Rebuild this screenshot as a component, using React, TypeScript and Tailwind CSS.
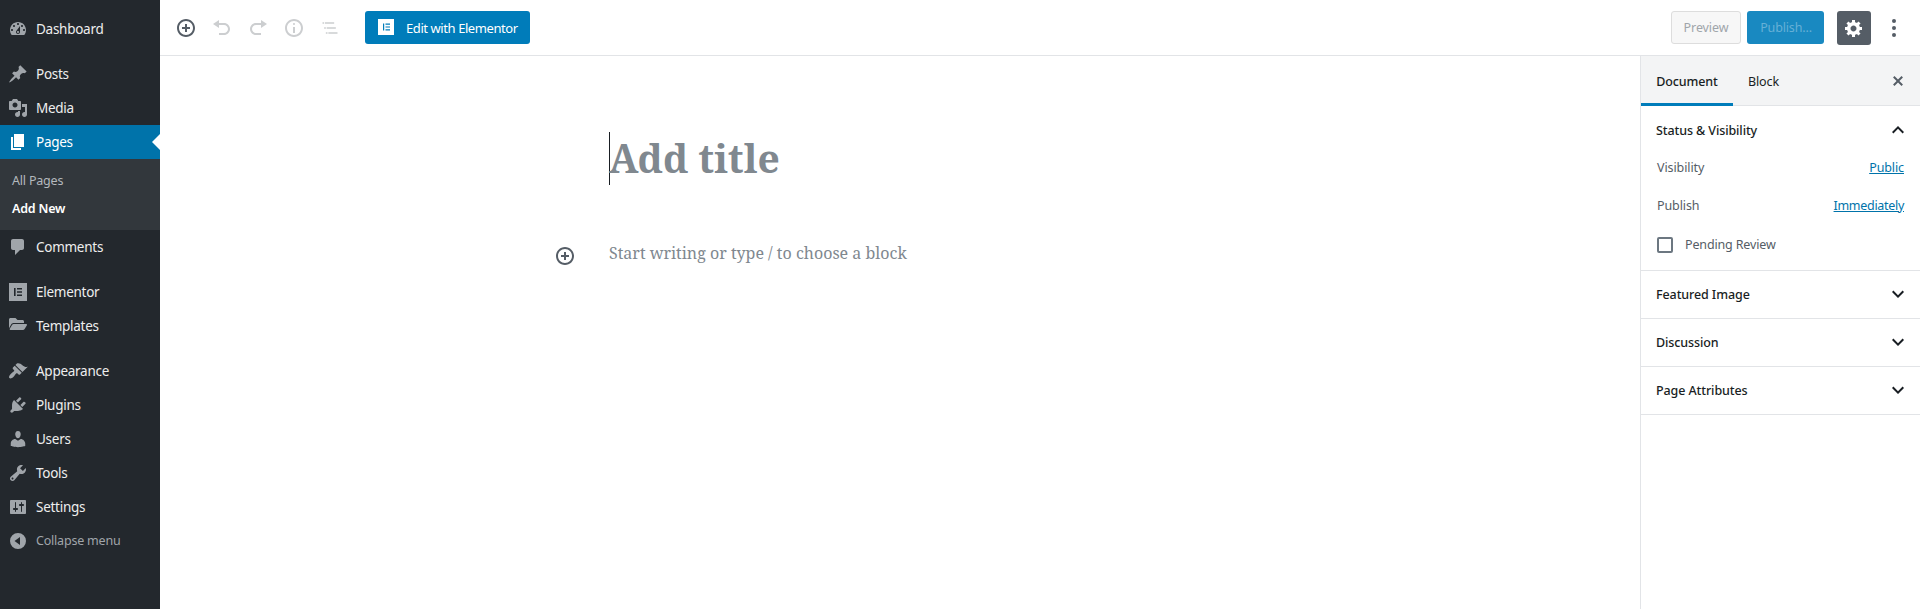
import React from "react";
import { FaFolderOpen } from "react-icons/fa";

const paths = {
  dashboard:
    "M3.76 16h12.48c1.1-1.37 1.76-3.11 1.76-5 0-4.42-3.58-8-8-8s-8 3.58-8 8c0 1.89.66 3.63 1.76 5zM10 4c.55 0 1 .45 1 1s-.45 1-1 1-1-.45-1-1 .45-1 1-1zM6 6c.55 0 1 .45 1 1s-.45 1-1 1-1-.45-1-1 .45-1 1-1zm8 0c.55 0 1 .45 1 1s-.45 1-1 1-1-.45-1-1 .45-1 1-1zm-5.37 5.55L12 7v6c0 1.1-.9 2-2 2s-2-.9-2-2c0-.57.24-1.08.63-1.45zM4 10c.55 0 1 .45 1 1s-.45 1-1 1-1-.45-1-1 .45-1 1-1zm12 0c.55 0 1 .45 1 1s-.45 1-1 1-1-.45-1-1 .45-1 1-1zm-5 3c0-.55-.45-1-1-1s-1 .45-1 1 .45 1 1 1 1-.45 1-1z",
  post: "M10.44 3.02l1.82-1.82 6.36 6.35-1.83 1.82c-1.05-.68-2.48-.57-3.41.36l-.75.75c-.92.93-1.04 2.35-.35 3.41l-1.83 1.82-2.41-2.41-2.8 2.79c-.42.42-3.38 2.71-3.8 2.29s1.86-3.39 2.28-3.81l2.79-2.79L4.1 9.36l1.83-1.82c1.05.69 2.48.57 3.4-.36l.75-.75c.93-.92 1.05-2.35.36-3.41z",
  media:
    "M13 11V4c0-.55-.45-1-1-1h-1.67L9 1H5L3.67 3H2c-.55 0-1 .45-1 1v7c0 .55.45 1 1 1h10c.55 0 1-.45 1-1zM7 4.5c1.38 0 2.5 1.12 2.5 2.5S8.38 9.5 7 9.5 4.5 8.38 4.5 7 5.62 4.5 7 4.5zM14 6h5v10.5c0 1.38-1.12 2.5-2.5 2.5S14 17.88 14 16.5s1.12-2.5 2.5-2.5c.17 0 .34.02.5.05V9h-3V6zm-4 8.05V13h2v3.5c0 1.38-1.12 2.5-2.5 2.5S7 17.88 7 16.5 8.12 14 9.5 14c.17 0 .34.02.5.05z",
  page: "M6 15V2h10v13H6zm-1 1h8v2H3V5h2v11z",
  comments:
    "M5 2h9c1.1 0 2 .9 2 2v7c0 1.1-.9 2-2 2h-2l-5 5v-5H5c-1.1 0-2-.9-2-2V4c0-1.1.9-2 2-2z",
  elementor: "M1 1h18v18H1zM6 6v8h1.6V6zM9 6v1.6h5V6zM9 9.2v1.6h5V9.2zM9 12.4V14h5v-1.6z",
  appearance:
    "M14.48 11.06L7.41 3.99l1.5-1.5c.5-.56 2.3-.47 3.51.32 1.21.8 1.43 1.28 2.91 2.1 1.18.64 2.45 1.26 4.45.85zm-.71.71L6.7 4.7 4.93 6.47c-.39.39-.39 1.02 0 1.41l1.06 1.06c.39.39.39 1.03 0 1.42-.6.6-1.43 1.11-2.21 1.69-.35.26-.7.53-1.01.84C1.43 14.23.4 16.08 1.4 17.07c.99 1 2.84-.03 4.18-1.36.31-.31.58-.66.85-1.02.57-.78 1.08-1.61 1.69-2.21.39-.39 1.02-.39 1.41 0l1.06 1.06c.39.39 1.02.39 1.41 0z",
  plugins:
    "M13.11 4.36L9.87 7.6 8 5.73l3.24-3.24c.35-.34 1.05-.2 1.56.32.52.51.66 1.21.31 1.55zm-8 1.77l.91-1.12 9.01 9.01-1.19.84c-.71.71-2.63 1.16-3.82 1.16H6.14L4.9 17.26c-.59.59-1.54.59-2.12 0-.59-.58-.59-1.53 0-2.12l1.24-1.24v-3.88c0-1.13.4-3.19 1.09-3.89zm7.26 3.97l3.24-3.24c.34-.35 1.04-.21 1.55.31.52.51.66 1.21.31 1.55l-3.24 3.25z",
  users:
    "M10 9.25c-2.27 0-2.73-3.44-2.73-3.44C7 4.02 7.82 2 9.97 2c2.16 0 2.98 2.02 2.71 3.81 0 0-.41 3.44-2.68 3.44zm0 2.57L12.72 10c2.39 0 4.52 2.33 4.52 4.53v2.49s-3.65 1.13-7.24 1.13c-3.65 0-7.24-1.13-7.24-1.13v-2.49c0-2.25 1.94-4.48 4.47-4.48z",
  tools:
    "M16.68 9.77c-1.34 1.34-3.3 1.67-4.95.99l-5.41 6.52c-.99.99-2.59.99-3.58 0s-.99-2.59 0-3.57l6.52-5.42c-.68-1.65-.35-3.61.99-4.95 1.28-1.28 3.12-1.62 4.72-1.06l-2.89 2.89 2.82 2.82 2.86-2.87c.53 1.58.18 3.39-1.08 4.65zM3.81 16.21c.4.39 1.04.39 1.43 0 .4-.4.4-1.04 0-1.43-.39-.4-1.03-.4-1.43 0-.39.39-.39 1.03 0 1.43z",
  settings:
    "M18 16V4c0-.55-.45-1-1-1H3c-.55 0-1 .45-1 1v12c0 .55.45 1 1 1h14c.55 0 1-.45 1-1zM8 11h1c.55 0 1 .45 1 1s-.45 1-1 1H8v1.5c0 .28-.22.5-.5.5s-.5-.22-.5-.5V13H6c-.55 0-1-.45-1-1s.45-1 1-1h1V5.5c0-.28.22-.5.5-.5s.5.22.5.5V11zm5-2h-1c-.55 0-1-.45-1-1s.45-1 1-1h1V5.5c0-.28.22-.5.5-.5s.5.22.5.5V7h1c.55 0 1 .45 1 1s-.45 1-1 1h-1v5.5c0 .28-.22.5-.5.5s-.5-.22-.5-.5V9z",
  collapse: "M10 2a8 8 0 1 0 0 16 8 8 0 0 0 0-16zM12 6v8l-5.500-4z",
  insert:
    "M10 1c-5 0-9 4-9 9s4 9 9 9 9-4 9-9-4-9-9-9zm0 16c-3.9 0-7-3.1-7-7s3.1-7 7-7 7 3.1 7 7-3.1 7-7 7zm1-11H9v3H6v2h3v3h2v-3h3V9h-3V6z",
  undo: "M12 5H7V2L1 6l6 4V7h5c2.2 0 4 1.8 4 4s-1.8 4-4 4H7v2h5c3.3 0 6-2.7 6-6s-2.7-6-6-6z",
  redo: "M8 5h5V2l6 4-6 4V7H8c-2.2 0-4 1.8-4 4s1.800 4 4 4h5v2H8c-3.300 0-6-2.700-6-6s2.700-6 6-6z",
  info: "M9 15h2V9H9v6zm1-10c-.5 0-1 .5-1 1s.5 1 1 1 1-.5 1-1-.5-1-1-1zm0-4c-5 0-9 4-9 9s4 9 9 9 9-4 9-9-4-9-9-9zm0 16c-3.9 0-7-3.1-7-7s3.1-7 7-7 7 3.1 7 7-3.1 7-7 7z",
  gear: "M18 12h-2.18c-.17.7-.44 1.35-.81 1.93l1.54 1.54-2.1 2.1-1.54-1.54c-.58.36-1.23.63-1.91.79V19H8v-2.18c-.68-.16-1.33-.43-1.91-.79l-1.54 1.54-2.12-2.12 1.54-1.54c-.36-.58-.63-1.23-.79-1.91H1V9.03h2.17c.16-.7.44-1.35.8-1.94L2.43 5.55l2.1-2.1 1.54 1.54c.58-.37 1.24-.64 1.93-.81V2h3v2.18c.68.16 1.33.43 1.91.79l1.54-1.54 2.12 2.12-1.54 1.54c.36.59.64 1.24.8 1.94H18V12zm-8.5 1.500c1.66 0 3-1.34 3-3s-1.34-3-3-3-3 1.34-3 3 1.34 3 3 3z",
  close:
    "M14.95 6.46L11.41 10l3.54 3.54-1.41 1.41L10 11.42l-3.53 3.53-1.42-1.42L8.58 10 5.05 6.47l1.42-1.42L10 8.58l3.54-3.53z",
};

type IconName = keyof typeof paths;

function Icon({ name, className = "" }: { name: IconName; className?: string }) {
  return (
    <svg viewBox="0 0 20 20" fill="currentColor" fillRule="evenodd" className={`size-5 shrink-0 ${className}`}>
      <path d={paths[name]} />
    </svg>
  );
}

function MenuItem({ icon, label, active }: { icon: IconName | "folder"; label: string; active?: boolean }) {
  const iconColor = active ? "text-white" : "text-[#a0a5aa]";
  return (
    <a className={`relative flex h-[34px] items-center pl-2 ${active ? "bg-[#0073aa] text-white" : "text-[#eeeeee]"}`}>
      {icon === "folder" ? (
        <span className="flex w-5 justify-center">
          <FaFolderOpen className={`h-4 w-[18px] -translate-y-0.5 ${iconColor}`} />
        </span>
      ) : (
        <Icon name={icon} className={iconColor} />
      )}
      <span className="ml-2 text-[13.5px] leading-[18px] tracking-[-0.27px]">{label}</span>
      {active && (
        <span className="absolute top-[9px] right-0 border-y-8 border-r-8 border-y-transparent border-r-white" />
      )}
    </a>
  );
}

function AdminMenu() {
  return (
    <nav className="flex w-40 shrink-0 flex-col bg-[#23282d] pt-3">
      <MenuItem icon="dashboard" label="Dashboard" />
      <div className="mt-[11px]">
        <MenuItem icon="post" label="Posts" />
        <MenuItem icon="media" label="Media" />
        <MenuItem icon="page" label="Pages" active />
        <div className="flex h-[71px] flex-col bg-[#32373c] pt-2 pl-3 text-[12.5px] leading-7">
          <a className="tracking-[-0.2px] text-[#b4b9be]">All Pages</a>
          <a className="font-semibold tracking-[-0.2px] text-white">Add New</a>
        </div>
        <MenuItem icon="comments" label="Comments" />
      </div>
      <div className="mt-[11px]">
        <MenuItem icon="elementor" label="Elementor" />
        <MenuItem icon="folder" label="Templates" />
      </div>
      <div className="mt-[11px]">
        <MenuItem icon="appearance" label="Appearance" />
        <MenuItem icon="plugins" label="Plugins" />
        <MenuItem icon="users" label="Users" />
        <MenuItem icon="tools" label="Tools" />
        <MenuItem icon="settings" label="Settings" />
      </div>
      <a className="flex h-[34px] items-center pl-2 text-[#a0a5aa]">
        <Icon name="collapse" />
        <span className="ml-2 text-[12.5px] tracking-[-0.2px]">Collapse menu</span>
      </a>
    </nav>
  );
}

function ToolButton({ children, muted }: { children: React.ReactNode; muted?: boolean }) {
  return (
    <button className={`flex size-9 items-center justify-center ${muted ? "text-[#ccced0]" : "text-[#555d66]"}`}>
      {children}
    </button>
  );
}

function TopBar() {
  return (
    <header className="flex h-14 shrink-0 items-start border-b border-[#e2e4e7] pt-2.5 pl-2 text-[12.5px]">
      <ToolButton>
        <Icon name="insert" />
      </ToolButton>
      <ToolButton muted>
        <Icon name="undo" />
      </ToolButton>
      <ToolButton muted>
        <Icon name="redo" />
      </ToolButton>
      <ToolButton muted>
        <Icon name="info" />
      </ToolButton>
      <ToolButton muted>
        <svg viewBox="0 0 24 24" fill="currentColor" className="size-5">
          <path d="M5 5H3v2h2V5zm3 8h11v-2H8v2zm9-8H6v2h11V5zM7 11H5v2h2v-2zm0 8h2v-2H7v2zm3-2v2h11v-2H10z" />
        </svg>
      </ToolButton>
      <button className="mt-px ml-[17px] flex h-[33px] w-[165px] items-start rounded-[3px] bg-[#007cba] pt-2 pl-[13px] text-white">
        <svg viewBox="0 0 16 16" className="size-4">
          <path fill="#fff" d="M0 0h16v16H0z" />
          <path fill="#007cba" d="M5 4.500h1.200v7H5zM7.500 4.500H12v1.200H7.500zM7.500 7.400H12v1.200H7.500zM7.500 10.300H12v1.200H7.500z" />
        </svg>
        <span className="ml-3 text-[13px] leading-[19px] tracking-[-0.42px]">Edit with Elementor</span>
      </button>
      <div className="ml-auto flex items-start">
        <button className="mt-px h-[33px] w-[70px] rounded-[3px] border border-[#dddddd] bg-[#f7f7f7] pt-0.5 tracking-[-0.1px] text-[#a0a5aa]">
          Preview
        </button>
        <button className="mt-px ml-1.5 h-[33px] w-[77px] rounded-[3px] bg-[#1989c1] pt-0.5 pl-px tracking-[-0.15px] text-[#66b0d6]">
          Publish...
        </button>
        <button className="mt-px ml-[13px] flex size-[34px] items-center justify-center rounded-[3px] bg-[#555d66] text-white">
          <Icon name="gear" />
        </button>
        <button className="mr-2 ml-[5px] flex size-9 items-center justify-center text-[#555d66]">
          <svg viewBox="0 0 20 20" fill="currentColor" className="size-5">
            <circle cx="10" cy="3" r="2" />
            <circle cx="10" cy="10" r="2" />
            <circle cx="10" cy="17" r="2" />
          </svg>
        </button>
      </div>
    </header>
  );
}

function Chevron({ up }: { up?: boolean }) {
  return (
    <svg viewBox="0 0 24 24" fill="currentColor" className="mb-0.5 size-6 shrink-0 text-[#191e23]">
      <path
        d={
          up
            ? "M12,8l-6,6l1.41,1.41L12,10.83l4.59,4.58L18,14L12,8z"
            : "M7.41,8.59L12,13.17l4.59-4.58L18,10l-6,6l-6-6L7.41,8.59z"
        }
      />
    </svg>
  );
}

function Panel({ title }: { title: string }) {
  return (
    <section className="flex h-12 items-center justify-between border-b border-[#e2e4e7] pr-2.5 pl-[15px]">
      <h2 className="pt-0.5 font-medium text-[#191e23]">{title}</h2>
      <Chevron />
    </section>
  );
}

function SettingsSidebar() {
  return (
    <aside className="w-[280px] shrink-0 border-l border-[#e2e4e7] text-[12.5px] tracking-[-0.1px]">
      <div className="flex h-[50px] items-stretch border-b border-[#e2e4e7] bg-[#f3f4f5] text-[#191e23]">
        <button className="-mb-px w-[92px] border-b-3 border-[#007cba] pt-1.5 font-medium">Document</button>
        <button className="w-[61px] pt-1">Block</button>
        <button className="mr-3 ml-auto text-[#555d66]">
          <Icon name="close" />
        </button>
      </div>
      <section className="h-[165px] border-b border-[#e2e4e7] pr-4 pl-[15px] text-[#555d66]">
        <div className="-mr-1.5 flex h-[49px] items-center justify-between">
          <h2 className="pt-0.5 font-medium text-[#191e23]">Status &amp; Visibility</h2>
          <Chevron up />
        </div>
        <div className="flex h-[26px] items-center justify-between pl-px">
          <span>Visibility</span>
          <a className="text-[#0073aa] underline">Public</a>
        </div>
        <div className="mt-3 flex h-[26px] items-center justify-between pl-px">
          <span>Publish</span>
          <a className="tracking-[-0.3px] text-[#0073aa] underline">Immediately</a>
        </div>
        <label className="mt-[13px] flex h-[26px] items-center pl-px">
          <span className="size-4 rounded-xs border-2 border-[#6c7781] bg-white" />
          <span className="ml-3 tracking-[-0.15px]">Pending Review</span>
        </label>
      </section>
      <Panel title="Featured Image" />
      <Panel title="Discussion" />
      <Panel title="Page Attributes" />
    </aside>
  );
}

function Canvas() {
  return (
    <main className="flex-1 pt-[76px] pl-[395px] font-['Noto_Serif',serif]">
      <div className="ml-[54px] flex h-[53px] items-start border-l border-[#191e23]">
        <h1 className="-mt-px -ml-px text-[39px] leading-[53px] font-bold whitespace-nowrap text-[#80888f]">
          Add title
        </h1>
      </div>
      <div className="mt-[55px] flex h-8 items-center">
        <Icon name="insert" className="text-[#555d66]" />
        <p className="mb-1.5 ml-[34px] text-base whitespace-nowrap text-[#80888f]">
          Start writing or type / to choose a block
        </p>
      </div>
    </main>
  );
}

export default function App() {
  return (
    <div className="flex h-[609px] w-[1920px] overflow-hidden bg-white font-['Segoe_UI','Noto_Sans',sans-serif]">
      <AdminMenu />
      <div className="flex flex-1 flex-col">
        <TopBar />
        <div className="flex flex-1">
          <Canvas />
          <SettingsSidebar />
        </div>
      </div>
    </div>
  );
}
